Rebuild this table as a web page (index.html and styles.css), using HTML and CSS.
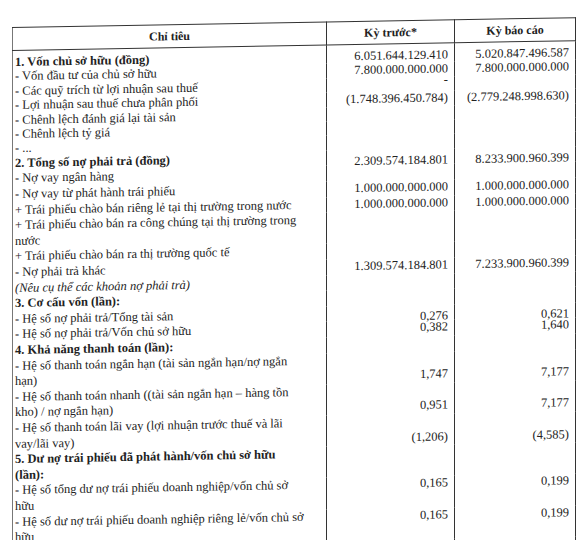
FILE: index.html
```html
<!DOCTYPE html>
<html lang="vi">
<head>
<meta charset="utf-8">
<title>Chỉ tiêu tài chính</title>
<link rel="stylesheet" href="styles.css">
</head>
<body>
<div class="sheet">
<table class="report">
  <colgroup>
    <col class="c-label">
    <col class="c-prev">
    <col class="c-cur">
  </colgroup>
  <thead>
    <tr>
      <th>Chỉ tiêu</th>
      <th>Kỳ trước*</th>
      <th>Kỳ báo cáo</th>
    </tr>
  </thead>
  <tbody>
    <tr class="tight first"><td class="b">1. Vốn chủ sở hữu (đồng)</td><td>6.051.644.129.410</td><td>5.020.847.496.587</td></tr>
    <tr class="tight"><td>- Vốn đầu tư của chủ sở hữu</td><td>7.800.000.000.000</td><td>7.800.000.000.000</td></tr>
    <tr class="tight"><td>- Các quỹ trích từ lợi nhuận sau thuế</td><td><span class="dash">-</span></td><td></td></tr>
    <tr class="tight"><td>- Lợi nhuận sau thuế chưa phân phối</td><td>(1.748.396.450.784)</td><td>(2.779.248.998.630)</td></tr>
    <tr class="tight"><td>- Chênh lệch đánh giá lại tài sản</td><td></td><td></td></tr>
    <tr class="tight"><td>- Chênh lệch tỷ giá</td><td></td><td></td></tr>
    <tr class="tight"><td>- ...</td><td></td><td></td></tr>
    <tr><td class="b">2. Tổng số nợ phải trả (đồng)</td><td><span class="drop">2.309.574.184.801</span></td><td><span class="drop">8.233.900.960.399</span></td></tr>
    <tr><td>- Nợ vay ngân hàng</td><td></td><td></td></tr>
    <tr><td>- Nợ vay từ phát hành trái phiếu</td><td>1.000.000.000.000</td><td>1.000.000.000.000</td></tr>
    <tr><td>+ Trái phiếu chào bán riêng lẻ tại thị trường trong nước</td><td>1.000.000.000.000</td><td>1.000.000.000.000</td></tr>
    <tr><td>+ Trái phiếu chào bán ra công chúng tại thị trường trong<br>nước</td><td></td><td></td></tr>
    <tr><td>+ Trái phiếu chào bán ra thị trường quốc tế</td><td></td><td></td></tr>
    <tr><td>- Nợ phải trả khác</td><td>1.309.574.184.801</td><td>7.233.900.960.399</td></tr>
    <tr><td class="i">(Nêu cụ thể các khoản nợ phải trả)</td><td></td><td></td></tr>
    <tr><td class="b">3. Cơ cấu vốn (lần):</td><td></td><td></td></tr>
    <tr><td>- Hệ số nợ phải trả/Tổng tài sản</td><td><span class="drop">0,276</span></td><td><span class="drop">0,621</span></td></tr>
    <tr><td>- Hệ số nợ phải trả/Vốn chủ sở hữu</td><td>0,382</td><td>1,640</td></tr>
    <tr><td class="b">4. Khả năng thanh toán (lần):</td><td></td><td></td></tr>
    <tr class="low"><td>- Hệ số thanh toán ngắn hạn (tài sản ngắn hạn/nợ ngắn<br>hạn)</td><td>1,747</td><td>7,177</td></tr>
    <tr class="low"><td>- Hệ số thanh toán nhanh ((tài sản ngắn hạn – hàng tồn<br>kho) / nợ ngắn hạn)</td><td>0,951</td><td>7,177</td></tr>
    <tr class="low"><td>- Hệ số thanh toán lãi vay (lợi nhuận trước thuế và lãi<br>vay/lãi vay)</td><td>(1,206)</td><td>(4,585)</td></tr>
    <tr><td class="b">5. Dư nợ trái phiếu đã phát hành/vốn chủ sở hữu<br>(lần):</td><td></td><td></td></tr>
    <tr><td>- Hệ số tổng dư nợ trái phiếu doanh nghiệp/vốn chủ sở<br>hữu</td><td>0,165</td><td>0,199</td></tr>
    <tr><td>- Hệ số dư nợ trái phiếu doanh nghiệp riêng lẻ/vốn chủ sở<br>hữu</td><td>0,165</td><td>0,199</td></tr>
    <tr><td>- Hệ số dư nợ trái phiếu chào bán ra công chúng/vốn chủ sở<br>hữu</td><td></td><td></td></tr>
  </tbody>
</table>
</div>
</body>
</html>
```

FILE: styles.css
```css
html, body {
  margin: 0;
  padding: 0;
  background: #ffffff;
  overflow: hidden;
}

.sheet {
  padding: 27px 0 0 12px;
}

.report {
  width: 563px;
  table-layout: fixed;
  border-collapse: collapse;
  font-family: "Liberation Serif", "Times New Roman", serif;
  font-size: 12.5px;
  line-height: 15.6px;
  color: #222222;
  transform: skewY(-1deg);
  transform-origin: 0 0;
}

.c-label { width: 314px; }
.c-prev { width: 128px; }
.c-cur { width: 121px; }

.report th {
  height: 22px;
  padding: 0;
  font-size: 12px;
  line-height: 14px;
  font-weight: bold;
  text-align: center;
  vertical-align: middle;
  border: 1px solid #333333;
}

.report th:first-child {
  border-left-color: #777777;
}

.report td {
  padding: 0 6px 0 2px;
  vertical-align: top;
  text-align: right;
  white-space: nowrap;
  border-left: 1px solid #333333;
  border-right: 1px solid #333333;
}

.report td:first-child {
  text-align: left;
  padding-left: 2px;
  border-left-color: #777777;
}

.report tr.tight td {
  line-height: 14.4px;
}

.report tr.first td {
  padding-top: 4px;
}

.report tr.low td {
  vertical-align: bottom;
}

.drop {
  line-height: 6px;
  vertical-align: -4px;
}

.b { font-weight: bold; }
.i { font-style: italic; }

.dash {
  display: inline-block;
  line-height: 6px;
  vertical-align: top;
}
```
